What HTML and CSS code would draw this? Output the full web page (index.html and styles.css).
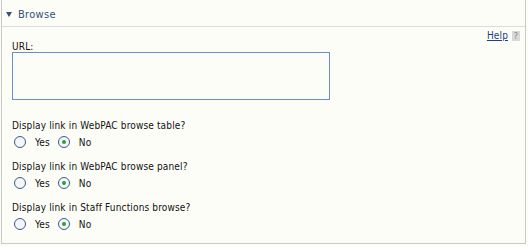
FILE: index.html
```html
<!DOCTYPE html>
<html>
<head>
    <title>Browse</title>
    <link rel="stylesheet" href="styles.css">
</head>
<body>
    <div class="panel">
        <div class="panel-head">
            <span class="arrow"></span>
            <span class="title">Browse</span>
        </div>
        <div class="panel-body">
            <div class="help-row">
                <a href="#" class="help">Help</a>
                <span class="qmark">?</span>
            </div>
            <label class="field-label" for="url">URL:</label>
            <textarea id="url" class="url-box"></textarea>

            <div class="question">
                <p>Display link in WebPAC browse table?</p>
                <div class="radios">
                    <span class="radio"></span><span class="opt">Yes</span>
                    <span class="radio checked"></span><span class="opt">No</span>
                </div>
            </div>

            <div class="question">
                <p>Display link in WebPAC browse panel?</p>
                <div class="radios">
                    <span class="radio"></span><span class="opt">Yes</span>
                    <span class="radio checked"></span><span class="opt">No</span>
                </div>
            </div>

            <div class="question">
                <p>Display link in Staff Functions browse?</p>
                <div class="radios">
                    <span class="radio"></span><span class="opt">Yes</span>
                    <span class="radio checked"></span><span class="opt">No</span>
                </div>
            </div>
        </div>
    </div>
</body>
</html>
```

FILE: styles.css
```css
body{
  margin:0;
  padding:0;
  font-family:"DejaVu Sans Condensed", "DejaVu Sans", Verdana, sans-serif;
  font-size:10px;
  color:#111;
  background:#fdfdf8;
}
.panel{
  width:525px;
  height:244px;
  margin-left:1px;
  border:1px solid #c8c8c8;
  border-top:none;
  box-sizing:border-box;
}
.panel-head{
  height:27px;
  border-bottom:1px solid #dcdcdc;
  display:flex;
  align-items:center;
  padding-left:4px;
  padding-top:3px;
  box-sizing:border-box;
}
.arrow{
  width:0;
  height:0;
  border-left:3px solid transparent;
  border-right:3px solid transparent;
  border-top:5px solid #33507a;
  margin-right:6px;
}
.title{
  color:#33507a;
  font-size:11px;
  letter-spacing:0.3px;
}
.panel-body{
  padding:0 0 0 10px;
  letter-spacing:0.15px;
}
.help-row{
  display:flex;
  justify-content:flex-end;
  align-items:center;
  height:17px;
  padding-right:5px;
}
.help{
  color:#1d3f86;
  text-decoration:underline;
  margin-right:4px;
}
.qmark{
  width:8px;
  height:10px;
  background:#d8d8d8;
  color:#888;
  font-size:9px;
  line-height:10px;
  text-align:center;
}
.field-label{
  display:block;
  height:8px;
  line-height:6px;
}
.url-box{
  display:block;
  width:318px;
  height:48px;
  margin:0;
  border:1px solid #6b8fc4;
  background:transparent;
  resize:none;
  box-sizing:border-box;
}
.question{
  margin-top:19px;
}
.question + .question{
  margin-top:9px;
}
.question p{
  margin:0;
  line-height:14px;
}
.radios{
  display:flex;
  align-items:center;
  height:18px;
  padding-left:2px;
}
.radio{
  width:10px;
  height:10px;
  border:1px solid #3b5b8c;
  border-radius:50%;
  background:#f4f6fa;
  position:relative;
  margin-right:9px;
}
.radio.checked::after{
  content:"";
  position:absolute;
  left:3px;
  top:3px;
  width:4px;
  height:4px;
  border-radius:50%;
  background:#2aa02a;
}
.opt{
  margin-right:8px;
}
```
